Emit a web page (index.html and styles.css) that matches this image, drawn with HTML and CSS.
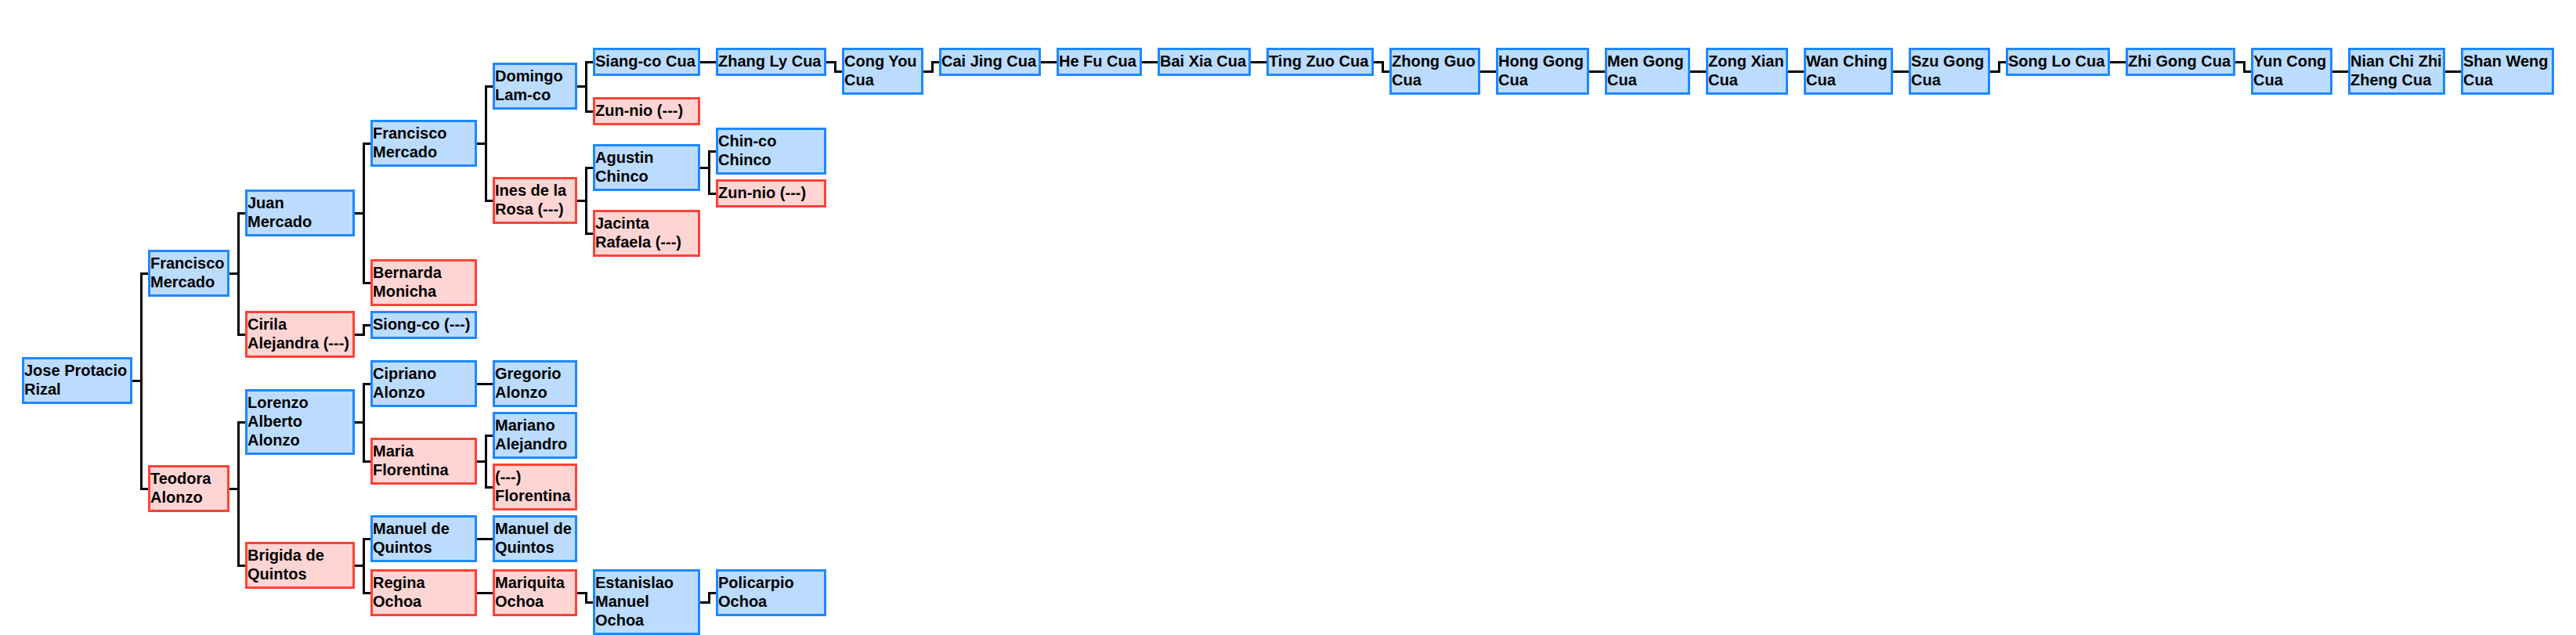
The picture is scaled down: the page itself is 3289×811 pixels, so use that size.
FILE: index.html
```html
<!DOCTYPE html>
<html lang="en">
<head>
<meta charset="utf-8">
<title>Jose Protacio Rizal ancestry</title>
<link rel="stylesheet" href="styles.css">
</head>
<body>
<main class="tree">
  <svg class="links" width="3289" height="811" viewBox="0 0 3289 811" aria-hidden="true">
    <path d="M169 486.5H180.5M189 349.5H180.5V624.5H189"/>
    <path d="M293 349.5H304.5M313 272.5H304.5V427.5H313"/>
    <path d="M293 624.5H304.5M313 539.5H304.5V722.5H313"/>
    <path d="M453 272.5H464.5M473 183.5H464.5V361.5H473"/>
    <path d="M453 427.5H464.5V415.5H473"/>
    <path d="M453 539.5H464.5M473 490.5H464.5V589.5H473"/>
    <path d="M453 722.5H464.5M473 688.5H464.5V757.5H473"/>
    <path d="M609 183.5H620.5M629 110.5H620.5V256.5H629"/>
    <path d="M737 110.5H748.5M757 79.5H748.5V142.5H757"/>
    <path d="M737 256.5H748.5M757 214.5H748.5V298.5H757"/>
    <path d="M894 214.5H905.5M914 193.5H905.5V247.5H914"/>
    <path d="M609 490.5H629"/>
    <path d="M609 589.5H620.5M629 556.5H620.5V622.5H629"/>
    <path d="M609 688.5H629"/>
    <path d="M609 757.5H629"/>
    <path d="M737 757.5H748.5V769.5H757"/>
    <path d="M894 769.5H905.5V757.5H914"/>
    <path d="M894 79.5H914"/>
    <path d="M1055 79.5H1066.5V91.5H1075"/>
    <path d="M1179 91.5H1190.5V79.5H1199"/>
    <path d="M1329 79.5H1349M1458 79.5H1478M1597 79.5H1617"/>
    <path d="M1754 79.5H1765.5V91.5H1774"/>
    <path d="M1890 91.5H1910M2029 91.5H2049M2158 91.5H2178M2283 91.5H2303M2417 91.5H2437"/>
    <path d="M2541 91.5H2552.5V79.5H2561"/>
    <path d="M2694 79.5H2714"/>
    <path d="M2854 79.5H2865.5V91.5H2874"/>
    <path d="M2978 91.5H2998M3122 91.5H3142"/>
  </svg>

  <div class="node male p-jose">Jose Protacio<br>Rizal</div>
  <div class="node male p-francisco1">Francisco<br>Mercado</div>
  <div class="node female p-teodora">Teodora<br>Alonzo</div>
  <div class="node male p-juan">Juan<br>Mercado</div>
  <div class="node female p-cirila">Cirila<br>Alejandra (---)</div>
  <div class="node male p-lorenzo">Lorenzo<br>Alberto<br>Alonzo</div>
  <div class="node female p-brigida">Brigida de<br>Quintos</div>
  <div class="node male p-francisco2">Francisco<br>Mercado</div>
  <div class="node female p-bernarda">Bernarda<br>Monicha</div>
  <div class="node male p-siong">Siong-co (---)</div>
  <div class="node male p-cipriano">Cipriano<br>Alonzo</div>
  <div class="node female p-maria">Maria<br>Florentina</div>
  <div class="node male p-manuel1">Manuel de<br>Quintos</div>
  <div class="node female p-regina">Regina<br>Ochoa</div>
  <div class="node male p-domingo">Domingo<br>Lam-co</div>
  <div class="node female p-ines">Ines de la<br>Rosa (---)</div>
  <div class="node male p-gregorio">Gregorio<br>Alonzo</div>
  <div class="node male p-mariano">Mariano<br>Alejandro</div>
  <div class="node female p-florentina">(---)<br>Florentina</div>
  <div class="node male p-manuel2">Manuel de<br>Quintos</div>
  <div class="node female p-mariquita">Mariquita<br>Ochoa</div>
  <div class="node male p-siang">Siang-co Cua</div>
  <div class="node female p-zun1">Zun-nio (---)</div>
  <div class="node male p-agustin">Agustin<br>Chinco</div>
  <div class="node female p-jacinta">Jacinta<br>Rafaela (---)</div>
  <div class="node male p-estanislao">Estanislao<br>Manuel<br>Ochoa</div>
  <div class="node male p-zhang">Zhang Ly Cua</div>
  <div class="node male p-chin">Chin-co<br>Chinco</div>
  <div class="node female p-zun2">Zun-nio (---)</div>
  <div class="node male p-policarpio">Policarpio<br>Ochoa</div>
  <div class="node male p-cong">Cong You<br>Cua</div>
  <div class="node male p-cai">Cai Jing Cua</div>
  <div class="node male p-hefu">He Fu Cua</div>
  <div class="node male p-bai">Bai Xia Cua</div>
  <div class="node male p-ting">Ting Zuo Cua</div>
  <div class="node male p-zhong">Zhong Guo<br>Cua</div>
  <div class="node male p-hong">Hong Gong<br>Cua</div>
  <div class="node male p-men">Men Gong<br>Cua</div>
  <div class="node male p-zong">Zong Xian<br>Cua</div>
  <div class="node male p-wan">Wan Ching<br>Cua</div>
  <div class="node male p-szu">Szu Gong<br>Cua</div>
  <div class="node male p-song">Song Lo Cua</div>
  <div class="node male p-zhi">Zhi Gong Cua</div>
  <div class="node male p-yun">Yun Cong<br>Cua</div>
  <div class="node male p-nian">Nian Chi Zhi<br>Zheng Cua</div>
  <div class="node male p-shan">Shan Weng<br>Cua</div>
</main>
</body>
</html>
```
FILE: styles.css
```css
html, body {
  margin: 0;
  padding: 0;
  background: #fff;
  overflow: hidden;
}

.tree {
  position: relative;
  width: 3289px;
  height: 811px;
  overflow: hidden;
  font-family: "Liberation Sans", Arial, sans-serif;
  font-weight: 700;
  font-size: 20px;
  line-height: 24px;
  color: #000;
}

.links {
  position: absolute;
  left: 0;
  top: 0;
}

.links path {
  fill: none;
  stroke: #000;
  stroke-width: 3;
  stroke-linejoin: miter;
}

.node {
  position: absolute;
  box-sizing: border-box;
  padding: 2px 0 4px;
  border: 3px solid;
  white-space: nowrap;
}

.male {
  background: #bbdcff;
  border-color: #1e88ff;
}

.female {
  background: #ffd5d3;
  border-color: #ff4238;
}

/* Diagram placement: each person is a node on the free canvas */
.p-jose { left: 28px; top: 456px; width: 141px; }
.p-francisco1 { left: 189px; top: 319px; width: 104px; }
.p-teodora { left: 189px; top: 594px; width: 104px; }
.p-juan { left: 313px; top: 242px; width: 140px; }
.p-cirila { left: 313px; top: 397px; width: 140px; }
.p-lorenzo { left: 313px; top: 497px; width: 140px; }
.p-brigida { left: 313px; top: 692px; width: 140px; }
.p-francisco2 { left: 473px; top: 153px; width: 136px; }
.p-bernarda { left: 473px; top: 331px; width: 136px; }
.p-siong { left: 473px; top: 397px; width: 136px; }
.p-cipriano { left: 473px; top: 460px; width: 136px; }
.p-maria { left: 473px; top: 559px; width: 136px; }
.p-manuel1 { left: 473px; top: 658px; width: 136px; }
.p-regina { left: 473px; top: 727px; width: 136px; }
.p-domingo { left: 629px; top: 80px; width: 108px; }
.p-ines { left: 629px; top: 226px; width: 108px; }
.p-gregorio { left: 629px; top: 460px; width: 108px; }
.p-mariano { left: 629px; top: 526px; width: 108px; }
.p-florentina { left: 629px; top: 592px; width: 108px; }
.p-manuel2 { left: 629px; top: 658px; width: 108px; }
.p-mariquita { left: 629px; top: 727px; width: 108px; }
.p-siang { left: 757px; top: 61px; width: 137px; }
.p-zun1 { left: 757px; top: 124px; width: 137px; }
.p-agustin { left: 757px; top: 184px; width: 137px; }
.p-jacinta { left: 757px; top: 268px; width: 137px; }
.p-estanislao { left: 757px; top: 727px; width: 137px; }
.p-zhang { left: 914px; top: 61px; width: 141px; }
.p-chin { left: 914px; top: 163px; width: 141px; }
.p-zun2 { left: 914px; top: 229px; width: 141px; }
.p-policarpio { left: 914px; top: 727px; width: 141px; }
.p-cong { left: 1075px; top: 61px; width: 104px; }
.p-cai { left: 1199px; top: 61px; width: 130px; }
.p-hefu { left: 1349px; top: 61px; width: 109px; }
.p-bai { left: 1478px; top: 61px; width: 119px; }
.p-ting { left: 1617px; top: 61px; width: 137px; }
.p-zhong { left: 1774px; top: 61px; width: 116px; }
.p-hong { left: 1910px; top: 61px; width: 119px; }
.p-men { left: 2049px; top: 61px; width: 109px; }
.p-zong { left: 2178px; top: 61px; width: 105px; }
.p-wan { left: 2303px; top: 61px; width: 114px; }
.p-szu { left: 2437px; top: 61px; width: 104px; }
.p-song { left: 2561px; top: 61px; width: 133px; }
.p-zhi { left: 2714px; top: 61px; width: 140px; }
.p-yun { left: 2874px; top: 61px; width: 104px; }
.p-nian { left: 2998px; top: 61px; width: 124px; }
.p-shan { left: 3142px; top: 61px; width: 119px; }
```
